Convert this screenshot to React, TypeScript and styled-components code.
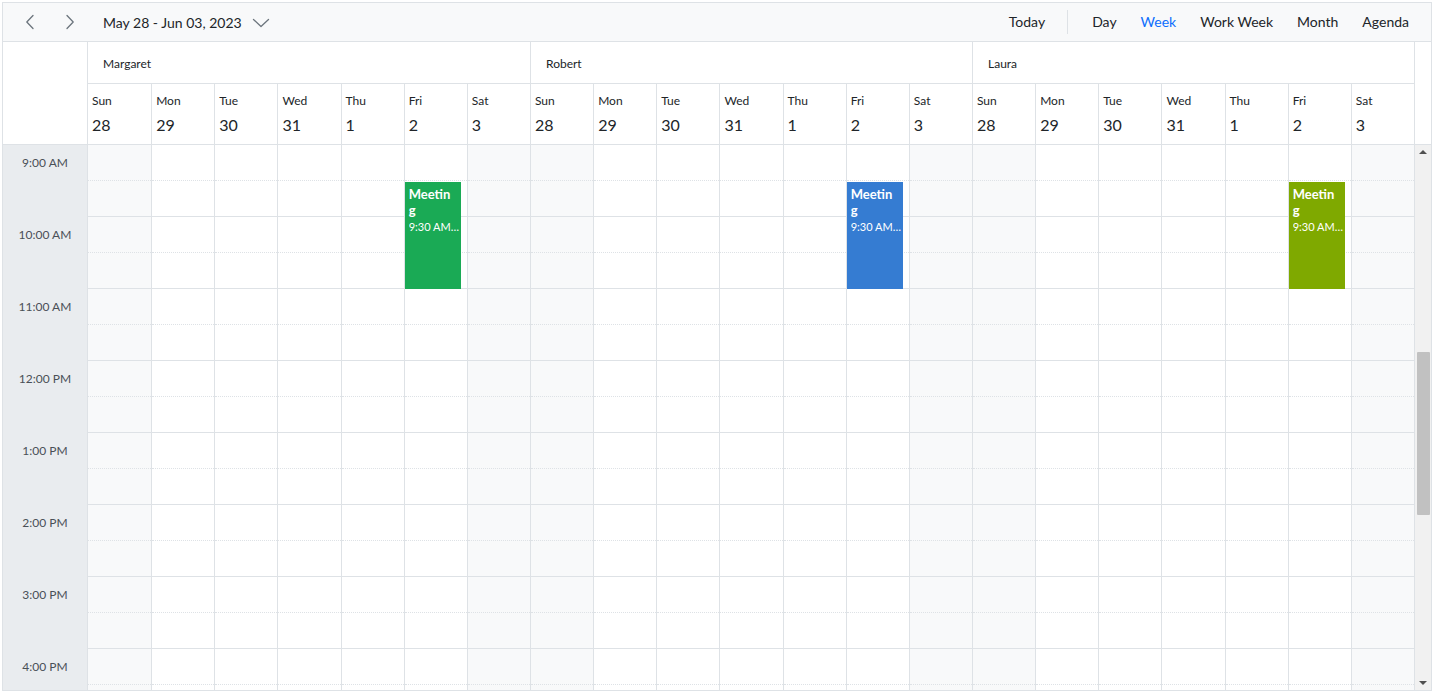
import styled, { createGlobalStyle } from 'styled-components';

const GlobalStyle = createGlobalStyle`
  html, body {
    margin: 0;
    padding: 0;
    background: #fff;
  }

  body {
    font-family: Lato, 'Noto Sans', sans-serif;
    color: #212529;
  }

  * {
    box-sizing: border-box;
  }
`;

const BORDER = '#dee2e6';

const RESOURCES = [
  { name: 'Margaret', color: '#1aaa55' },
  { name: 'Robert', color: '#357cd2' },
  { name: 'Laura', color: '#7fa900' },
];

const DAYS = [
  { name: 'Sun', date: 28, weekend: true },
  { name: 'Mon', date: 29, weekend: false },
  { name: 'Tue', date: 30, weekend: false },
  { name: 'Wed', date: 31, weekend: false },
  { name: 'Thu', date: 1, weekend: false },
  { name: 'Fri', date: 2, weekend: false },
  { name: 'Sat', date: 3, weekend: true },
];

const HOURS = ['9:00 AM', '10:00 AM', '11:00 AM', '12:00 PM', '1:00 PM', '2:00 PM', '3:00 PM', '4:00 PM'];

const VIEWS = ['Day', 'Week', 'Work Week', 'Month', 'Agenda'];

const SLOT = 36;

const Chevron = ({ dir }: { dir: 'left' | 'right' }) => (
  <svg width="10" height="16" viewBox="0 0 10 16" fill="none">
    <polyline
      points={dir === 'left' ? '8,1.5 1.8,8 8,14.5' : '2,1.5 8.2,8 2,14.5'}
      stroke="#6c757d"
      strokeWidth="1.3"
      strokeLinecap="round"
      strokeLinejoin="round"
    />
  </svg>
);

const CaretDown = () => (
  <svg width="18" height="10" viewBox="0 0 18 10" fill="none">
    <polyline points="1.5,1.5 9,8.5 16.5,1.5" stroke="#6c757d" strokeWidth="1.3" strokeLinecap="round" strokeLinejoin="round" />
  </svg>
);

const App = () => {
  return (
    <>
      <GlobalStyle />
      <StyledScheduler>
        <StyledToolbar>
          <StyledNavButton type="button">
            <Chevron dir="left" />
          </StyledNavButton>
          <StyledNavButton type="button">
            <Chevron dir="right" />
          </StyledNavButton>
          <StyledDateRange>
            May 28 - Jun 03, 2023
            <CaretDown />
          </StyledDateRange>
          <StyledToolbarRight>
            <StyledViewButton type="button">Today</StyledViewButton>
            <StyledSeparator />
            {VIEWS.map((view) => (
              <StyledViewButton key={view} type="button" $active={view === 'Week'}>
                {view}
              </StyledViewButton>
            ))}
          </StyledToolbarRight>
        </StyledToolbar>

        <StyledHeader>
          <StyledCorner />
          <StyledHeaderMain>
            <StyledResourceRow>
              {RESOURCES.map((r) => (
                <StyledResourceCell key={r.name}>{r.name}</StyledResourceCell>
              ))}
            </StyledResourceRow>
            <StyledDateRow>
              {RESOURCES.map((r) =>
                DAYS.map((d) => (
                  <StyledDateCell key={r.name + d.name}>
                    <StyledDayName>{d.name}</StyledDayName>
                    <StyledDayNumber>{d.date}</StyledDayNumber>
                  </StyledDateCell>
                )),
              )}
            </StyledDateRow>
          </StyledHeaderMain>
          <StyledHeaderGap />
        </StyledHeader>

        <StyledBody>
          <StyledTimeColumn>
            {HOURS.map((h) => (
              <StyledTimeCell key={h}>{h}</StyledTimeCell>
            ))}
          </StyledTimeColumn>
          <StyledGrid>
            {RESOURCES.map((r) =>
              DAYS.map((d) => (
                <StyledDayColumn key={r.name + d.name} $weekend={d.weekend}>
                  {Array.from({ length: HOURS.length * 2 }).map((_, i) => (
                    <StyledSlot key={i} $half={i % 2 === 0} />
                  ))}
                  {d.name === 'Fri' && (
                    <StyledEvent $color={r.color}>
                      <StyledEventTitle>Meeting</StyledEventTitle>
                      <StyledEventTime>9:30 AM - 11:00 AM</StyledEventTime>
                    </StyledEvent>
                  )}
                </StyledDayColumn>
              )),
            )}
          </StyledGrid>
          <StyledScrollbar>
            <StyledArrow $up />
            <StyledThumb />
            <StyledArrow />
          </StyledScrollbar>
        </StyledBody>
      </StyledScheduler>
    </>
  );
};

export default App;

const StyledScheduler = styled.div`
  display: flex;
  flex-direction: column;

  width: 1430px;
  height: 689px;
  margin: 2px;

  border: 1px solid ${BORDER};
  background: #fff;
  overflow: hidden;
`;

const StyledToolbar = styled.div`
  display: flex;
  align-items: center;
  flex: none;

  height: 39px;
  padding: 0 10px 0 7px;

  border-bottom: 1px solid ${BORDER};
  background: #f8f9fa;
`;

const StyledNavButton = styled.button`
  display: flex;
  align-items: center;
  justify-content: center;

  width: 40px;
  height: 30px;
  padding: 0;

  border: none;
  background: none;
`;

const StyledDateRange = styled.div`
  display: flex;
  align-items: center;
  gap: 0 10px;

  margin-left: 13px;

  color: #212529;
  font-size: 14px;

  & > svg {
    margin-top: 1px;
  }
`;

const StyledToolbarRight = styled.div`
  display: flex;
  align-items: center;

  margin-left: auto;
`;

const StyledViewButton = styled.button<{ $active?: boolean }>`
  padding: 0 12px;

  border: none;
  background: none;

  color: ${({ $active }) => ($active ? '#0d6efd' : '#212529')};
  font-family: inherit;
  font-size: 14px;
  line-height: 20px;
`;

const StyledSeparator = styled.div`
  width: 1px;
  height: 24px;
  margin: 0 12px 0 10px;

  background: ${BORDER};
`;

const StyledHeader = styled.div`
  display: flex;
  flex: none;

  border-bottom: 1px solid ${BORDER};
`;

const StyledCorner = styled.div`
  width: 85px;
  flex: none;

  border-right: 1px solid ${BORDER};
`;

const StyledHeaderMain = styled.div`
  flex: 1;
  min-width: 0;
`;

const StyledHeaderGap = styled.div`
  width: 17px;
  flex: none;

  border-left: 1px solid ${BORDER};
`;

const StyledResourceRow = styled.div`
  display: grid;
  grid-template-columns: repeat(3, 1fr);

  height: 42px;

  border-bottom: 1px solid ${BORDER};
`;

const StyledResourceCell = styled.div`
  display: flex;
  align-items: center;

  padding: 1px 0 0 15px;

  border-left: 1px solid ${BORDER};

  font-size: 12px;

  &:first-child {
    border-left: none;
  }
`;

const StyledDateRow = styled.div`
  display: grid;
  grid-template-columns: repeat(21, 1fr);

  height: 60px;
`;

const StyledDateCell = styled.div`
  display: flex;
  flex-direction: column;

  padding: 9px 0 0 4px;

  border-left: 1px solid ${BORDER};

  &:first-child {
    border-left: none;
  }
`;

const StyledDayName = styled.span`
  font-size: 12px;
  line-height: 16px;
`;

const StyledDayNumber = styled.span`
  margin-top: 4px;

  font-size: 16px;
  line-height: 24px;
`;

const StyledBody = styled.div`
  display: flex;
  flex: 1;
  min-height: 0;
`;

const StyledTimeColumn = styled.div`
  width: 85px;
  flex: none;

  border-right: 1px solid ${BORDER};
  background: #e9ecef;
`;

const StyledTimeCell = styled.div`
  height: ${SLOT * 2}px;
  padding-top: 9px;

  color: #495057;
  font-size: 12px;
  line-height: 18px;
  text-align: center;
`;

const StyledGrid = styled.div`
  display: grid;
  grid-template-columns: repeat(21, 1fr);
  flex: 1;
  min-width: 0;
`;

const StyledDayColumn = styled.div<{ $weekend: boolean }>`
  position: relative;

  border-left: 1px solid ${BORDER};
  background: ${({ $weekend }) => ($weekend ? '#f8f9fa' : '#fff')};

  &:first-child {
    border-left: none;
  }
`;

const StyledSlot = styled.div<{ $half: boolean }>`
  height: ${SLOT}px;

  border-bottom: 1px ${({ $half }) => ($half ? 'dotted' : 'solid')} ${BORDER};
`;

const StyledEvent = styled.div<{ $color: string }>`
  position: absolute;
  top: ${SLOT + 1}px;
  left: 0;
  right: 6px;

  height: ${SLOT * 3 - 1}px;
  padding: 4px 1px 0 4px;

  background: ${({ $color }) => $color};
  color: #fff;
`;

const StyledEventTitle = styled.div`
  margin-right: 5px;

  font-size: 13px;
  font-weight: bold;
  line-height: 16px;
  word-break: break-all;
`;

const StyledEventTime = styled.div`
  overflow: hidden;

  margin-top: 2px;

  font-size: 11px;
  line-height: 14px;
  text-overflow: ellipsis;
  white-space: nowrap;
`;

const StyledScrollbar = styled.div`
  display: flex;
  flex-direction: column;
  align-items: center;

  width: 17px;
  flex: none;
  padding: 5px 0;

  border-left: 1px solid ${BORDER};
  background: #f1f1f1;
`;

const StyledArrow = styled.div<{ $up?: boolean }>`
  width: 0;
  height: 0;
  margin-top: ${({ $up }) => ($up ? '0' : 'auto')};

  border-left: 4px solid transparent;
  border-right: 4px solid transparent;
  ${({ $up }) => ($up ? 'border-bottom: 4px solid #505050;' : 'border-top: 4px solid #505050;')}
`;

const StyledThumb = styled.div`
  width: 13px;
  height: 163px;
  margin-top: 198px;

  border-radius: 1px;
  background: #c1c1c1;
`;
